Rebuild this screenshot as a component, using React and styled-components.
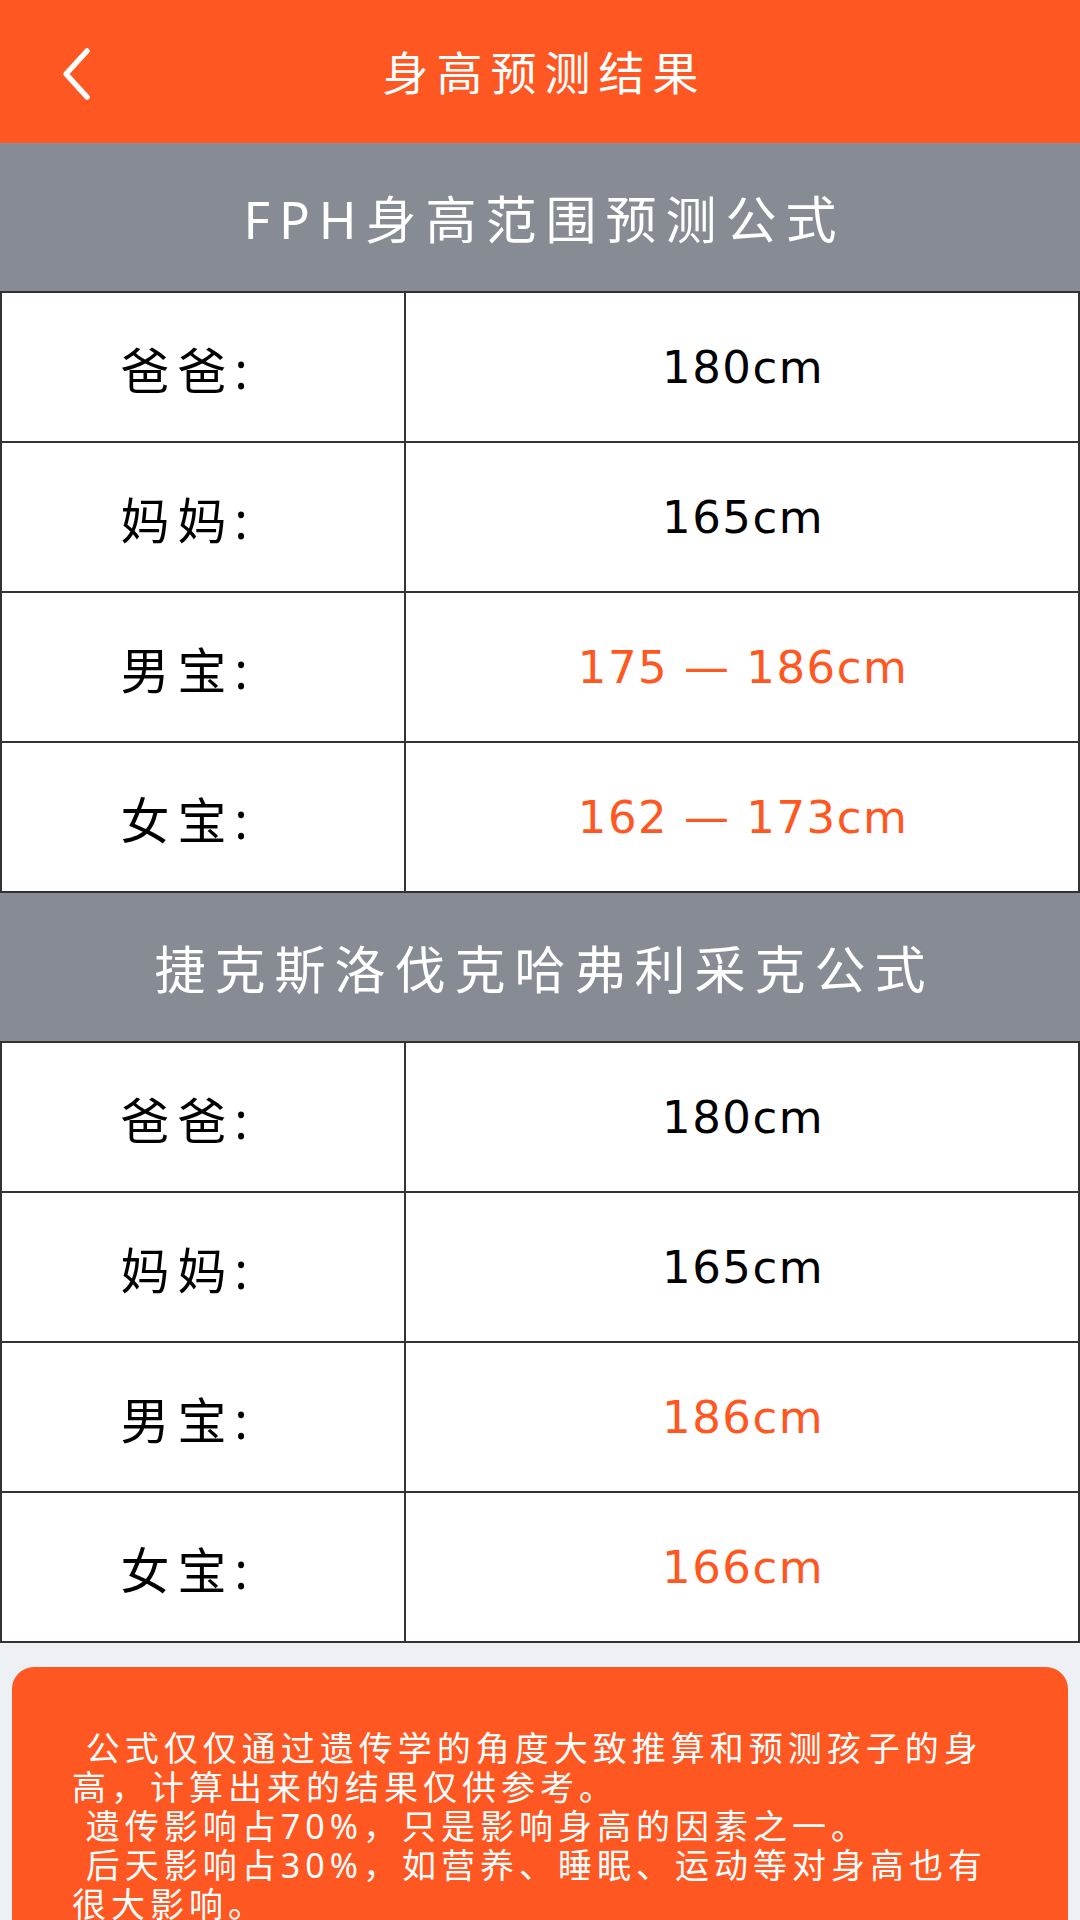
import React from "react";
import styled, { createGlobalStyle } from "styled-components";

const GlobalStyle = createGlobalStyle`
  html, body {
    margin: 0;
    padding: 0;
    background: #ffffff;
  }
  body {
    font-family: "Noto Sans", "Noto Sans CJK SC", sans-serif;
    -webkit-font-smoothing: antialiased;
  }
`;

const ORANGE = "#ff5722";
const LINE = "#333333";

const Page = styled.div`
  width: 1080px;
  min-height: 1920px;
  background: #edf1f5;
  display: flex;
  flex-direction: column;
  overflow: hidden;
`;

const TopBar = styled.header`
  position: relative;
  height: 143px;
  background: ${ORANGE};
  display: flex;
  align-items: center;
  justify-content: center;
`;

const BackButton = styled.button`
  position: absolute;
  left: 48px;
  top: 42px;
  width: 56px;
  height: 66px;
  padding: 0;
  border: none;
  background: transparent;
  display: flex;
  align-items: center;
  justify-content: center;
  cursor: pointer;
`;

const Title = styled.h1`
  margin: 0;
  padding-left: 9px;
  color: #ffffff;
  font-size: 46px;
  font-weight: 400;
  letter-spacing: 8px;
  line-height: 1;
`;

const SectionHead = styled.div`
  height: 148px;
  background: #868b94;
  display: flex;
  align-items: center;
  justify-content: center;
  color: #ffffff;
  font-size: 51px;
  letter-spacing: 9px;
  padding-left: 9px;
`;

const Table = styled.div`
  background: #ffffff;
  border: 2px solid ${LINE};
  border-bottom: none;
`;

const Row = styled.div`
  display: grid;
  grid-template-columns: 404px 1fr;
  height: 148px;
  border-bottom: 2px solid ${LINE};
`;

const LabelCell = styled.div`
  display: flex;
  align-items: center;
  justify-content: center;
  border-right: 2px solid ${LINE};
  color: #000000;
  font-size: 49px;
  letter-spacing: 8px;
  padding-right: 30px;
`;

const ValueCell = styled.div`
  display: flex;
  align-items: center;
  justify-content: center;
  color: ${(p) => (p.$highlight ? ORANGE : "#000000")};
  font-family: "DejaVu Sans", "Noto Sans CJK SC", sans-serif;
  font-size: 45px;
  letter-spacing: 1.5px;
  padding-left: 2px;
`;

const Notice = styled.section`
  margin: 24px 12px 0;
  padding: 62px 60px 40px;
  border-radius: 22px;
  background: ${ORANGE};
  color: #ffffff;
  font-size: 34px;
  line-height: 39px;
  letter-spacing: 5px;
  white-space: pre-wrap;
`;

const NoticeLine = styled.p`
  margin: 0;
`;

function ChevronLeft() {
  return (
    <svg width="40" height="56" viewBox="0 0 40 56" fill="none">
      <path
        d="M31 4 L10 27 L31 50"
        stroke="#ffffff"
        strokeWidth="5.5"
        strokeLinecap="round"
        strokeLinejoin="round"
      />
    </svg>
  );
}

const sections = [
  {
    title: "FPH身高范围预测公式",
    rows: [
      { label: "爸爸:", value: "180cm" },
      { label: "妈妈:", value: "165cm" },
      { label: "男宝:", value: "175 — 186cm", highlight: true },
      { label: "女宝:", value: "162 — 173cm", highlight: true },
    ],
  },
  {
    title: "捷克斯洛伐克哈弗利采克公式",
    rows: [
      { label: "爸爸:", value: "180cm" },
      { label: "妈妈:", value: "165cm" },
      { label: "男宝:", value: "186cm", highlight: true },
      { label: "女宝:", value: "166cm", highlight: true },
    ],
  },
];

const notes = [
  " 公式仅仅通过遗传学的角度大致推算和预测孩子的身高，计算出来的结果仅供参考。",
  " 遗传影响占70%，只是影响身高的因素之一。",
  " 后天影响占30%，如营养、睡眠、运动等对身高也有很大影响。",
];

export default function App() {
  return (
    <>
      <GlobalStyle />
      <Page>
        <TopBar>
          <BackButton aria-label="返回">
            <ChevronLeft />
          </BackButton>
          <Title>身高预测结果</Title>
        </TopBar>

        {sections.map((section) => (
          <React.Fragment key={section.title}>
            <SectionHead>{section.title}</SectionHead>
            <Table>
              {section.rows.map((row) => (
                <Row key={row.label}>
                  <LabelCell>{row.label}</LabelCell>
                  <ValueCell $highlight={row.highlight}>{row.value}</ValueCell>
                </Row>
              ))}
            </Table>
          </React.Fragment>
        ))}

        <Notice>
          {notes.map((line) => (
            <NoticeLine key={line}>{line}</NoticeLine>
          ))}
        </Notice>
      </Page>
    </>
  );
}
